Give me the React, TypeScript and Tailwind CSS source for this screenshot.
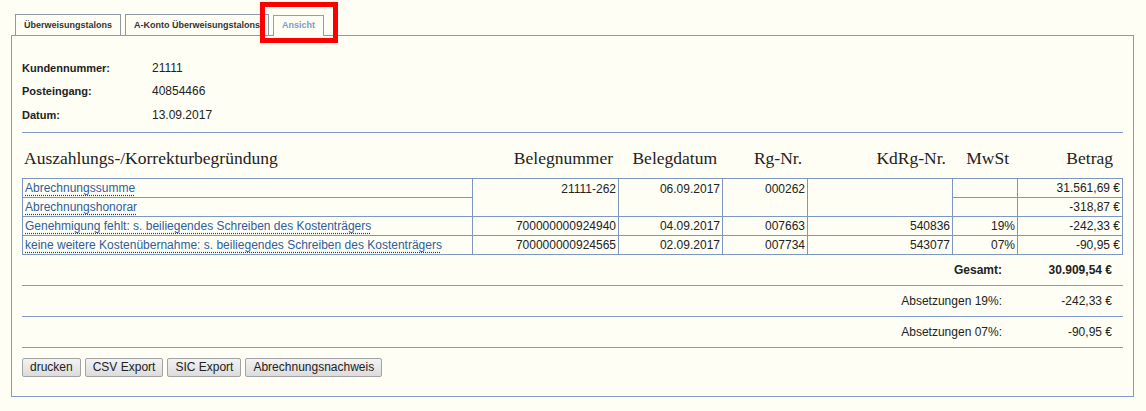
import React from "react";

const cols = "grid-cols-[450px_146px_104px_85px_145px_65px_105px]";

const Link = ({ children }: { children: React.ReactNode }) => (
  <a className="text-[#2f5d9e] underline decoration-dotted decoration-[#1d3d78] underline-offset-[3px]">{children}</a>
);

const Cell = ({ children, className = "" }: { children?: React.ReactNode; className?: string }) => (
  <div className={`flex h-[19px] items-center border-b border-r border-[#7c97c3] px-[2px] ${className}`}>{children}</div>
);

const tabs = [
  { label: "Überweisungstalons", active: false },
  { label: "A-Konto Überweisungstalons", active: false },
  { label: "Ansicht", active: true },
];

const summary = [
  { label: "Gesamt:", value: "30.909,54 €", bold: true },
  { label: "Absetzungen 19%:", value: "-242,33 €", bold: false },
  { label: "Absetzungen 07%:", value: "-90,95 €", bold: false },
];

const buttons = ["drucken", "CSV Export", "SIC Export", "Abrechnungsnachweis"];

export default function App() {
  return (
    <div className="relative min-h-[411px] w-[1146px] bg-[#fffef5] pl-[11px] pt-[14px] font-['Liberation_Sans',Arial,sans-serif] text-[12px] text-[#222]">
      {/* tabs */}
      <div className="relative z-10 -mb-px flex items-end gap-1 pl-[4px]">
        {tabs.map((t) =>
          t.active ? (
            <div
              key={t.label}
              className="flex h-[21px] items-center border border-b-0 border-[#8ea0b3] bg-[#fffef5] px-[8px] text-[9px] font-bold text-[#7b9cc8]"
            >
              {t.label}
            </div>
          ) : (
            <div
              key={t.label}
              className="flex h-[22px] items-center border border-b-0 border-[#8f99a4] px-[8px] text-[9px] font-bold text-[#333]"
            >
              {t.label}
            </div>
          )
        )}
      </div>

      {/* panel */}
      <div className="w-[1123px] border border-[#7f9bc6] px-[10px] pb-[19px] pt-[20px]">
        <div className="grid grid-cols-[130px_1fr]">
          <div className="flex h-[23.5px] items-center text-[11px] font-bold">Kundennummer:</div>
          <div className="flex h-[23.5px] items-center">21111</div>
          <div className="flex h-[23.5px] items-center text-[11px] font-bold">Posteingang:</div>
          <div className="flex h-[23.5px] items-center">40854466</div>
          <div className="flex h-[23.5px] items-center text-[11px] font-bold">Datum:</div>
          <div className="flex h-[23.5px] items-center">13.09.2017</div>
        </div>

        <div className="mt-[5px] border-t border-[#7f9bc6]" />

        {/* column headings */}
        <div className={`grid ${cols} pl-px pb-[9px] pt-[14px] font-['Liberation_Serif','Times_New_Roman',serif] text-[17.5px] leading-[22px] text-[#222]`}>
          <div className="pl-[1px]">Auszahlungs-/Korrekturbegründung</div>
          <div className="pr-[6px] text-right">Belegnummer</div>
          <div className="pr-[6px] text-right">Belegdatum</div>
          <div className="pr-[6px] text-right">Rg-Nr.</div>
          <div className="pr-[7px] text-right">KdRg-Nr.</div>
          <div className="pr-[9px] text-right">MwSt</div>
          <div className="pr-[10px] text-right">Betrag</div>
        </div>

        {/* table */}
        <div className={`grid ${cols} border-l border-t border-[#7c97c3]`}>
          <Cell><Link>Abrechnungssumme</Link></Cell>
          <Cell className="row-span-2 h-auto items-start justify-end pt-[1px]">21111-262</Cell>
          <Cell className="row-span-2 h-auto items-start justify-end pt-[1px]">06.09.2017</Cell>
          <Cell className="row-span-2 h-auto items-start justify-end pt-[1px]">000262</Cell>
          <Cell className="row-span-2 h-auto" />
          <Cell />
          <Cell className="justify-end">31.561,69 €</Cell>

          <Cell><Link>Abrechnungshonorar</Link></Cell>
          <Cell />
          <Cell className="justify-end">-318,87 €</Cell>

          <Cell><Link>Genehmigung fehlt: s. beiliegendes Schreiben des Kostenträgers</Link></Cell>
          <Cell className="justify-end">700000000924940</Cell>
          <Cell className="justify-end">04.09.2017</Cell>
          <Cell className="justify-end">007663</Cell>
          <Cell className="justify-end">540836</Cell>
          <Cell className="justify-end">19%</Cell>
          <Cell className="justify-end">-242,33 €</Cell>

          <Cell><Link>keine weitere Kostenübernahme: s. beiliegendes Schreiben des Kostenträgers</Link></Cell>
          <Cell className="justify-end">700000000924565</Cell>
          <Cell className="justify-end">02.09.2017</Cell>
          <Cell className="justify-end">007734</Cell>
          <Cell className="justify-end">543077</Cell>
          <Cell className="justify-end">07%</Cell>
          <Cell className="justify-end">-90,95 €</Cell>
        </div>

        {/* totals */}
        {summary.map((s, i) => (
          <div
            key={s.label}
            className={`flex items-center justify-end ${i > 0 ? "h-[31px] border-t border-[#7f9bc6]" : "h-[30px]"} ${s.bold ? "font-bold" : ""}`}
          >
            <div className="text-right">{s.label}</div>
            <div className="w-[121px] pr-[11px] text-right">{s.value}</div>
          </div>
        ))}
        <div className="border-t border-[#7f9bc6]" />

        {/* buttons */}
        <div className="mt-[10px] flex gap-[4px]">
          {buttons.map((b) => (
            <button
              key={b}
              className="h-[19px] rounded-[2px] border border-[#a3a3a3] bg-gradient-to-b from-[#f3f3f3] to-[#dcdcdc] px-[7px] text-[12px] leading-none text-[#222]"
            >
              {b}
            </button>
          ))}
        </div>
      </div>

      {/* red highlight annotation */}
      <div className="pointer-events-none absolute left-[260px] top-[2px] z-20 h-[41px] w-[78px] border-[5px] border-[#ff0000]" />
    </div>
  );
}
